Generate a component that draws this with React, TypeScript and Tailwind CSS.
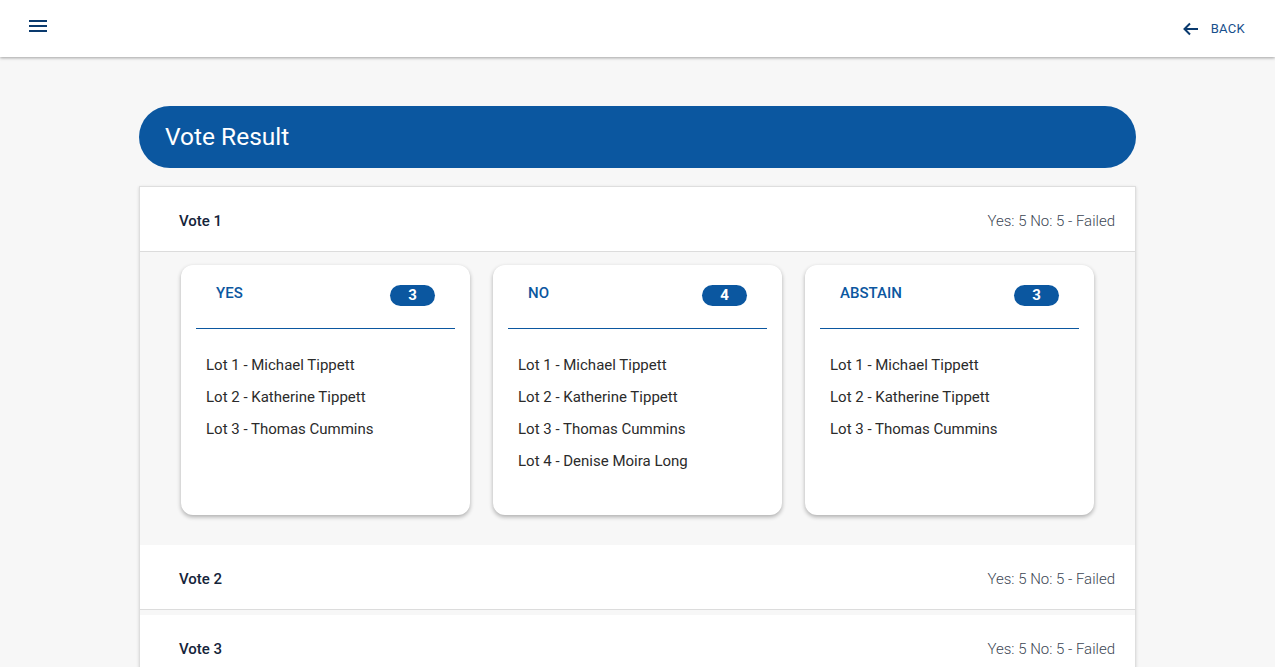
import React from 'react';

type Group = { label: string; count: number; lots: string[] };

const groups: Group[] = [
  { label: 'YES', count: 3, lots: ['Lot 1 - Michael Tippett', 'Lot 2 - Katherine Tippett', 'Lot 3 - Thomas Cummins'] },
  {
    label: 'NO',
    count: 4,
    lots: ['Lot 1 - Michael Tippett', 'Lot 2 - Katherine Tippett', 'Lot 3 - Thomas Cummins', 'Lot 4 - Denise Moira Long'],
  },
  { label: 'ABSTAIN', count: 3, lots: ['Lot 1 - Michael Tippett', 'Lot 2 - Katherine Tippett', 'Lot 3 - Thomas Cummins'] },
];

function VoteRow({ title }: { title: string }) {
  return (
    <div className="flex h-[65px] items-center justify-between border-b border-[#dcdcdc] bg-white pl-[39px] pr-[20px] pt-[4px]">
      <span className="text-[15px] font-medium text-[#15243a]">{title}</span>
      <span className="text-[15px] font-light text-[#3c4654]">Yes: 5 No: 5 - Failed</span>
    </div>
  );
}

function GroupCard({ group }: { group: Group }) {
  return (
    <div className="h-[250px] w-[289px] rounded-[12px] bg-white shadow-[0_2px_4px_rgba(0,0,0,0.3)]">
      <div className="mx-[15px] flex h-[64px] items-start justify-between border-b border-[#0b57a0] px-[20px] pt-[17px]">
        <span className="text-[15px] font-medium text-[#0b57a0]">{group.label}</span>
        <span className="mt-[3px] flex h-[21px] w-[45px] items-center justify-center rounded-full bg-[#0b57a0] text-[15px] font-bold text-white">
          {group.count}
        </span>
      </div>
      <ul className="pl-[25px] pt-[25px]">
        {group.lots.map((lot) => (
          <li key={lot} className="h-[32px] text-[15px] leading-[22px] text-[#2b2b2b]">
            {lot}
          </li>
        ))}
      </ul>
    </div>
  );
}

export default function App() {
  return (
    <div className="min-h-screen bg-[#f7f7f7] font-['Roboto',sans-serif]">
      <header className="flex h-[57px] items-start justify-between bg-white pl-[28px] pr-[30px] shadow-[0_1px_3px_rgba(0,0,0,0.35)]">
        <button type="button" className="mt-[19px]">
          <svg width="20" height="14" viewBox="0 0 20 14">
            <rect x="1" y="1" width="18" height="2" fill="#0a3a6e" />
            <rect x="1" y="6" width="18" height="2" fill="#0a3a6e" />
            <rect x="1" y="11" width="18" height="2" fill="#0a3a6e" />
          </svg>
        </button>
        <button type="button" className="mt-[19px] flex items-center gap-[12px] text-[13px] tracking-[0.3px] text-[#174f8c]">
          <svg width="16" height="14" viewBox="0 0 16 14" fill="none" stroke="#0a3a6e" strokeWidth="2">
            <path d="M15 7H2M7 1.5 1.5 7 7 12.5" />
          </svg>
          BACK
        </button>
      </header>

      <main className="mx-auto w-[997px] pt-[49px]">
        <div className="flex h-[62px] items-center rounded-full bg-[#0b57a0] px-[26px]">
          <h1 className="text-[24.5px] font-normal text-white">Vote Result</h1>
        </div>

        <div className="mt-[18px] border border-[#dedede] shadow-[0_1px_3px_rgba(0,0,0,0.15)]">
          <VoteRow title="Vote 1" />
          <div className="flex gap-[23px] bg-[#f7f7f7] pb-[30px] pl-[41px] pt-[13px]">
            {groups.map((g) => (
              <GroupCard key={g.label} group={g} />
            ))}
          </div>
          <VoteRow title="Vote 2" />
          <div className="h-[5px] bg-[#f7f7f7]" />
          <VoteRow title="Vote 3" />
        </div>
      </main>
    </div>
  );
}
